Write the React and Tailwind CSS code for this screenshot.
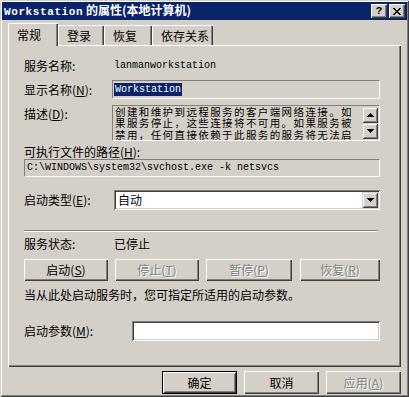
import React from "react";

const F = { fontFamily: '"Noto Sans CJK SC", "Liberation Sans", sans-serif' };
const M = { fontFamily: '"Liberation Mono", "Noto Sans CJK SC", monospace' };

function Btn({ children, disabled, className = "", def }) {
  return (
    <div
      className={
        "flex items-center justify-center text-[12px] leading-none bg-[#d4d0c8] " +
        (def
          ? "border border-black shadow-[inset_1px_1px_0_#fff,inset_-1px_-1px_0_#404040,inset_2px_2px_0_#d4d0c8,inset_-2px_-2px_0_#808080] "
          : "shadow-[inset_1px_1px_0_#fff,inset_-1px_-1px_0_#404040,inset_-2px_-2px_0_#808080] ") +
        (disabled ? "text-[#808080] [text-shadow:1px_1px_0_#fff] " : "text-black ") +
        className
      }
    >
      {children}
    </div>
  );
}

function Sunken({ className = "", children }) {
  return (
    <div
      className={
        "shadow-[inset_1px_1px_0_#808080,inset_-1px_-1px_0_#fff,inset_2px_2px_0_#404040,inset_-2px_-2px_0_#d4d0c8] " +
        className
      }
    >
      {children}
    </div>
  );
}

function ScrollBtn({ up }) {
  return (
    <div className="w-[16px] h-[16px] bg-[#d4d0c8] shadow-[inset_1px_1px_0_#d4d0c8,inset_-1px_-1px_0_#404040,inset_2px_2px_0_#fff,inset_-2px_-2px_0_#808080] flex items-center justify-center">
      <svg width="7" height="4" viewBox="0 0 7 4">
        {up ? (
          <path d="M3 0h1v1h1v1h1v1h1v1H0V3h1V2h1V1h1z" fill="#000" />
        ) : (
          <path d="M0 0h7v1H6v1H5v1H4v1H3V3H2V2H1V1H0z" fill="#000" />
        )}
      </svg>
    </div>
  );
}

export default function App() {
  return (
    <div
      style={F}
      className="w-[409px] h-[397px] bg-[#d4d0c8] relative overflow-hidden shadow-[inset_1px_1px_0_#d4d0c8,inset_-1px_-1px_0_#404040,inset_2px_2px_0_#fff,inset_-2px_-2px_0_#808080] p-[2px] flex flex-col"
    >
      {/* Title bar */}
      <div className="h-[18px] bg-[#0a246a] flex items-center pl-[2px] pr-[2px]">
        <div className="text-white text-[12px] font-bold leading-none flex-1 whitespace-nowrap">
          <span style={M} className="text-[11px] tracking-[0.6px]">Workstation</span>
          <span> 的属性(本地计算机)</span>
        </div>
        <div className="flex gap-[2px]">
          <div className="w-[16px] h-[14px] bg-[#d4d0c8] shadow-[inset_1px_1px_0_#fff,inset_-1px_-1px_0_#404040,inset_-2px_-2px_0_#808080] flex items-center justify-center text-[11px] font-bold leading-none text-black" style={M}>
            ?
          </div>
          <div className="w-[16px] h-[14px] bg-[#d4d0c8] shadow-[inset_1px_1px_0_#fff,inset_-1px_-1px_0_#404040,inset_-2px_-2px_0_#808080] flex items-center justify-center">
            <svg width="8" height="7" viewBox="0 0 8 7">
              <path d="M0 0h2v1h1v1h2V1h1V0h2v1H7v1H6v1H5v1h1v1h1v1h1v1H6V6H5V5H3v1H2v1H0V6h1V5h1V4h1V3H2V2H1V1H0z" fill="#000" />
            </svg>
          </div>
        </div>
      </div>

      {/* Tabs */}
      <div className="flex items-end h-[23px] mt-[2px] pl-[6px] text-[12px] leading-none">
        <div className="relative z-10 h-[23px] w-[50px] bg-[#d4d0c8] border-l border-t border-white shadow-[inset_-1px_0_0_#404040,inset_-2px_0_0_#808080] flex items-start pt-[5px] pl-[8px] -mb-[1px] rounded-tl-[2px]">
          常规
        </div>
        <div className="h-[20px] w-[46px] border-l border-t border-white shadow-[inset_-1px_0_0_#404040,inset_-2px_0_0_#808080] flex items-start pt-[4px] pl-[8px]">
          登录
        </div>
        <div className="h-[20px] w-[48px] border-l border-t border-white shadow-[inset_-1px_0_0_#404040,inset_-2px_0_0_#808080] flex items-start pt-[4px] pl-[8px]">
          恢复
        </div>
        <div className="h-[20px] w-[61px] border-l border-t border-white shadow-[inset_-1px_0_0_#404040,inset_-2px_0_0_#808080] flex items-start pt-[4px] pl-[8px]">
          依存关系
        </div>
      </div>

      {/* Panel */}
      <div className="mx-[6px] h-[322px] border-l border-t border-white shadow-[inset_-1px_-1px_0_#404040,inset_-2px_-2px_0_#808080] pl-[15px] pr-[21px] pt-[12px] text-[12px] leading-none text-black flex flex-col">
        <div className="flex items-center h-[16px]">
          <div className="w-[90px]">服务名称:</div>
          <div style={M} className="text-[10px]">lanmanworkstation</div>
        </div>

        <div className="flex items-center h-[19px] mt-[6px]">
          <div className="w-[88px]">显示名称(<u>N</u>):</div>
          <div className="flex-1 h-[19px] border border-[#808080] border-r-white border-b-white bg-[#d4d0c8] flex items-center pl-[1px]">
            <span style={M} className="text-[10px] bg-[#0a246a] text-white px-[1px] leading-[13px]">Workstation</span>
          </div>
        </div>

        <div className="flex h-[36px] mt-[6px]">
          <div className="w-[88px] pt-[3px]">描述(<u>D</u>):</div>
          <div className="flex-1 border border-[#808080] border-r-white border-b-white flex">
            <div className="flex-1 pl-[2px] text-[10.5px] tracking-[1.4px] leading-[11.3px] whitespace-nowrap overflow-hidden flex flex-col">
              <div>创建和维护到远程服务的客户端网络连接。如</div>
              <div>果服务停止，这些连接将不可用。如果服务被</div>
              <div>禁用，任何直接依赖于此服务的服务将无法启</div>
            </div>
            <div className="w-[16px] flex flex-col justify-between py-[1px] mr-[1px]">
              <ScrollBtn up />
              <ScrollBtn />
            </div>
          </div>
        </div>

        <div className="mt-[4px] h-[14px] flex items-center">可执行文件的路径(<u>H</u>):</div>
        <div className="h-[18px] border border-[#808080] border-r-white border-b-white flex items-center pl-[2px]">
          <span style={M} className="text-[10px]">C:\WINDOWS\system32\svchost.exe -k netsvcs</span>
        </div>

        <div className="flex items-center h-[20px] mt-[13px]">
          <div className="w-[90px]">启动类型(<u>E</u>):</div>
          <Sunken className="flex-1 h-[20px] bg-white flex items-center p-[2px]">
            <div className="flex-1 pl-[2px]">自动</div>
            <div className="w-[16px] h-[16px] bg-[#d4d0c8] shadow-[inset_1px_1px_0_#d4d0c8,inset_-1px_-1px_0_#404040,inset_2px_2px_0_#fff,inset_-2px_-2px_0_#808080] flex items-center justify-center">
              <svg width="7" height="4" viewBox="0 0 7 4">
                <path d="M0 0h7v1H6v1H5v1H4v1H3V3H2V2H1V1H0z" fill="#000" />
              </svg>
            </div>
          </Sunken>
        </div>

        <div className="mt-[20px] h-[2px] border-t border-[#808080] border-b border-b-white mr-[2px]" />

        <div className="flex items-center h-[16px] mt-[4px]">
          <div className="w-[90px]">服务状态:</div>
          <div>已停止</div>
        </div>

        <div className="flex h-[22px] mt-[7px] gap-[7px]">
          <Btn className="w-[84px]">启动(<u>S</u>)</Btn>
          <Btn disabled className="w-[84px]">停止(<u>T</u>)</Btn>
          <Btn disabled className="w-[86px]">暂停(<u>P</u>)</Btn>
          <Btn disabled className="flex-1 ml-[1px]">恢复(<u>R</u>)</Btn>
        </div>

        <div className="mt-[7px] h-[14px] flex items-center">当从此处启动服务时，您可指定所适用的启动参数。</div>

        <div className="flex items-center h-[20px] mt-[19px]">
          <div className="w-[108px]">启动参数(<u>M</u>):</div>
          <Sunken className="flex-1 h-[20px] bg-white" />
        </div>
      </div>

      {/* Bottom buttons */}
      <div className="flex justify-end gap-[7px] pr-[6px] mt-[4px] text-[12px]">
        <Btn def className="w-[75px] h-[23px]">确定</Btn>
        <Btn className="w-[75px] h-[23px]">取消</Btn>
        <Btn disabled className="w-[75px] h-[23px]">应用(<u>A</u>)</Btn>
      </div>
    </div>
  );
}
